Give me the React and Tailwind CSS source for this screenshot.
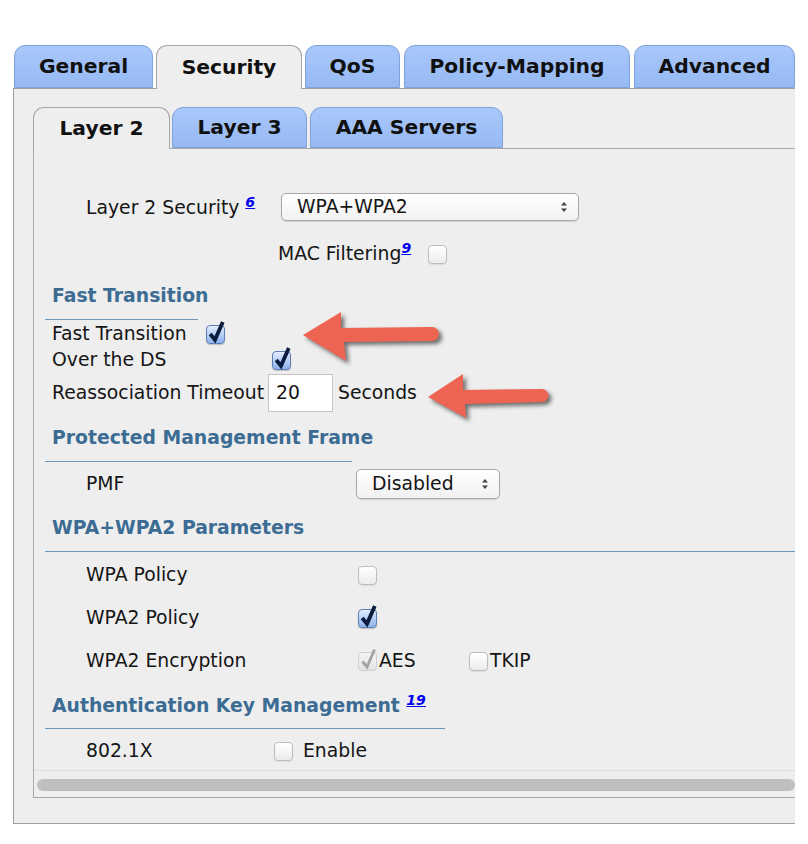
import React from "react";

function Box({ checked, disabled }) {
  if (disabled) {
    return (
      <span className="relative block w-[19px] h-[19px] rounded-[4px] border border-[#cfcfcf] bg-linear-to-b from-[#f4f4f4] to-[#e4e4e4]">
        <svg className="absolute left-0 top-[-6px] overflow-visible" width="20" height="24" viewBox="0 0 20 24">
          <path d="M3.5 14.5 L8 20 L15.5 2.5" fill="none" stroke="#a3a3a3" strokeWidth="2.8" />
        </svg>
      </span>
    );
  }
  if (checked) {
    return (
      <span className="relative block w-[19px] h-[19px] rounded-[4px] border border-[#5f7fb3] bg-linear-to-b from-[#e3edfe] to-[#8db1ec] shadow-[0_1px_1px_rgba(0,0,0,0.2)]">
        <svg className="absolute left-0 top-[-6px] overflow-visible" width="20" height="24" viewBox="0 0 20 24">
          <path d="M3.2 14 L8 19.8 L15.8 2" fill="none" stroke="#0b1c3f" strokeWidth="3.8" strokeLinejoin="miter" />
        </svg>
      </span>
    );
  }
  return (
    <span className="block w-[19px] h-[19px] rounded-[4px] border border-[#bdbdbd] bg-linear-to-b from-white to-[#ececec] shadow-[0_1px_1px_rgba(0,0,0,0.08)]" />
  );
}

function Sup({ children }) {
  return (
    <span className="relative top-[-7px] text-[14px] font-bold italic underline text-[#0000ee]">
      {children}
    </span>
  );
}

function SelectBox({ value, w, h }) {
  return (
    <div
      className={`flex items-center justify-between ${w} ${h} rounded-[5px] border border-[#a9a9a9] bg-linear-to-b from-white to-[#f1f1f1] shadow-[0_1px_1px_rgba(0,0,0,0.12)] pl-[15px] pr-[10px]`}
    >
      <span>{value}</span>
      <svg width="8" height="12" viewBox="0 0 8 12">
        <path d="M4 1 L7 4.5 L1 4.5 Z" fill="#444" />
        <path d="M4 11 L7 7.5 L1 7.5 Z" fill="#444" />
      </svg>
    </div>
  );
}

function Heading({ children, mt }) {
  return (
    <div className={`${mt} h-[24px] pl-[18px] flex items-center font-bold text-[#3c6c93] text-[18.8px]`}>
      {children}
    </div>
  );
}

function OuterTab({ label, w, ml, active }) {
  return active ? (
    <div
      className={`${w} ${ml} h-[44px] -mb-px relative z-10 flex items-center justify-center rounded-t-[11px] border border-b-0 border-[#a7a7a7] bg-[#eeeeee] font-bold text-[20.3px] text-[#111]`}
    >
      {label}
    </div>
  ) : (
    <div
      className={`${w} ${ml} h-[43px] flex items-center justify-center rounded-t-[11px] border border-[#7fa2d8] bg-linear-to-b from-[#a9c8fb] to-[#96b9f3] font-bold text-[20.3px] text-[#111]`}
    >
      {label}
    </div>
  );
}

function InnerTab({ label, w, ml, active }) {
  return active ? (
    <div
      className={`${w} ${ml} h-[42px] -mb-px relative z-10 flex items-center justify-center rounded-t-[11px] border border-b-0 border-[#a7a7a7] bg-[#eeeeee] font-bold text-[20.3px] text-[#111]`}
    >
      {label}
    </div>
  ) : (
    <div
      className={`${w} ${ml} h-[41px] flex items-center justify-center rounded-t-[11px] border border-[#7fa2d8] bg-linear-to-b from-[#a9c8fb] to-[#96b9f3] font-bold text-[20.3px] text-[#111]`}
    >
      {label}
    </div>
  );
}

export default function App() {
  return (
    <div className="relative w-[808px] h-[844px] bg-white overflow-hidden font-['DejaVu_Sans',sans-serif] text-[18.8px] text-[#151515]">
      <div className="pt-[45px] pl-[13px]">
        <div className="flex items-end pl-[1px]">
          <OuterTab label="General" w="w-[139px]" ml="ml-0" />
          <OuterTab label="Security" w="w-[146px]" ml="ml-[3px]" active />
          <OuterTab label="QoS" w="w-[95px]" ml="ml-[3px]" />
          <OuterTab label="Policy-Mapping" w="w-[226px]" ml="ml-[4px]" />
          <OuterTab label="Advanced" w="w-[161px]" ml="ml-[4px]" />
        </div>
        <div className="w-[782px] border-l border-t border-b border-[#a0a0a0] bg-[#eeeeee] pt-[18px] pl-[19px] pb-[25px]">
          <div className="flex items-end">
            <InnerTab label="Layer 2" w="w-[137px]" ml="ml-0" active />
            <InnerTab label="Layer 3" w="w-[135px]" ml="ml-[2px]" />
            <InnerTab label="AAA Servers" w="w-[193px]" ml="ml-[3px]" />
          </div>
          <div className="border-l border-t border-b border-[#a8a8a8] bg-[#eeeeee]">
            {/* Layer 2 Security */}
            <div className="mt-[44px] h-[28px] pl-[52px] flex items-center">
              <div className="w-[195px] whitespace-nowrap pt-[3px]">
                Layer 2 Security <Sup>6</Sup>
              </div>
              <SelectBox value="WPA+WPA2" w="w-[298px]" h="h-[28px]" />
            </div>
            {/* MAC Filtering */}
            <div className="mt-[21px] h-[24px] pl-[244px] flex items-center">
              <div className="w-[150px] whitespace-nowrap">
                MAC Filtering<Sup>9</Sup>
              </div>
              <Box />
            </div>

            <Heading mt="mt-[18px]">Fast Transition</Heading>
            <div className="mt-[11px] ml-[11px] w-[153px] h-px bg-[#6f97ba]" />

            <div className="mt-[2px] h-[24px] pl-[18px] flex items-center">
              <div className="w-[154px] whitespace-nowrap">Fast Transition</div>
              <Box checked />
            </div>
            <div className="mt-[2px] h-[24px] pl-[18px] flex items-center">
              <div className="w-[220px] whitespace-nowrap">Over the DS</div>
              <Box checked />
            </div>
            <div className="mt-[2px] h-[38px] pl-[18px] flex items-center">
              <div className="w-[216px] whitespace-nowrap">Reassociation Timeout</div>
              <div className="w-[65px] h-[38px] border border-[#c4c4c4] bg-white flex items-center pl-[7px]">20</div>
              <div className="ml-[5px]">Seconds</div>
            </div>

            <Heading mt="mt-[14px]">Protected Management Frame</Heading>
            <div className="mt-[11px] ml-[11px] w-[307px] h-px bg-[#6f97ba]" />
            <div className="mt-[7px] h-[30px] pl-[52px] flex items-center">
              <div className="w-[270px]">PMF</div>
              <SelectBox value="Disabled" w="w-[144px]" h="h-[30px]" />
            </div>

            <Heading mt="mt-[17px]">WPA+WPA2 Parameters</Heading>
            <div className="mt-[11px] ml-[11px] h-px bg-[#6f97ba]" />
            <div className="mt-[11px] h-[24px] pl-[52px] flex items-center">
              <div className="w-[272px]">WPA Policy</div>
              <Box />
            </div>
            <div className="mt-[19px] h-[24px] pl-[52px] flex items-center">
              <div className="w-[272px]">WPA2 Policy</div>
              <Box checked />
            </div>
            <div className="mt-[19px] h-[24px] pl-[52px] flex items-center">
              <div className="w-[272px]">WPA2 Encryption</div>
              <Box disabled />
              <div className="w-[92px] pl-[2px]">AES</div>
              <Box />
              <div className="pl-[2px]">TKIP</div>
            </div>

            <Heading mt="mt-[21px]">
              <span className="whitespace-nowrap">
                Authentication Key Management <Sup>19</Sup>
              </span>
            </Heading>
            <div className="mt-[10px] ml-[11px] w-[400px] h-px bg-[#6f97ba]" />
            <div className="mt-[10px] h-[24px] pl-[52px] flex items-center">
              <div className="w-[188px]">802.1X</div>
              <Box />
              <div className="ml-[10px]">Enable</div>
            </div>

            <div className="mt-[7px] border-t border-[#dedede] h-[27px] pt-[8px] pl-[3px]">
              <div className="h-[12px] rounded-full bg-[#bfbfbf]" />
            </div>
          </div>
        </div>
      </div>

      {/* annotation arrows */}
      <svg
        className="absolute left-0 top-0 pointer-events-none drop-shadow-[3px_3px_2px_rgba(0,0,0,0.55)]"
        width="808"
        height="844"
        viewBox="0 0 808 844"
      >
        <path
          d="M303 335 L341 312 L341 328 L432 327 A7 7 0 0 1 432 341 L344 342 L346 361 Z"
          fill="#ee6452"
        />
        <path
          d="M428 397 L463 374 L463 390 L542 389 A6.5 6.5 0 0 1 542 402 L465 404 L466 418 Z"
          fill="#ee6452"
        />
      </svg>
    </div>
  );
}
